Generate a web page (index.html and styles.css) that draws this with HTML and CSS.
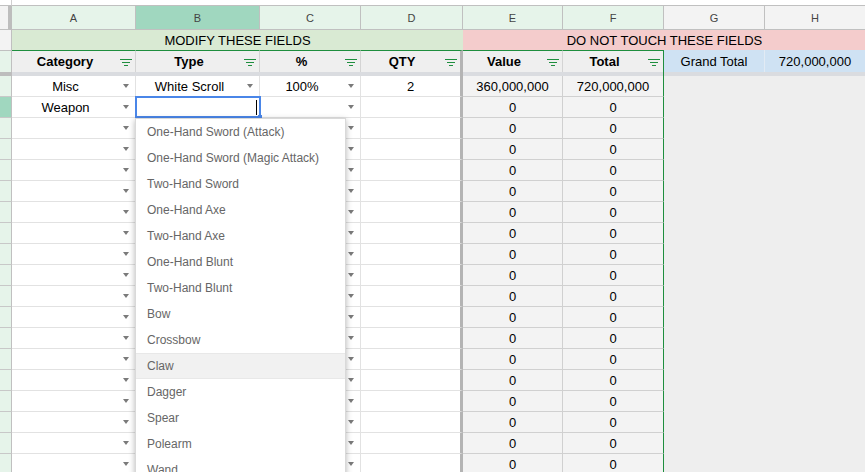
FILE: index.html
```html
<!DOCTYPE html>
<html>
<head>
<meta charset="utf-8">
<title>Sheet</title>
<link rel="stylesheet" href="styles.css">
</head>
<body>
<div class="sheet">
  <div class="strip-rh"></div>
  <div class="strip"></div>

  <div class="corner"></div>
  <div class="col">A</div>
  <div class="col sel">B</div>
  <div class="col">C</div>
  <div class="col">D</div>
  <div class="col">E</div>
  <div class="col">F</div>
  <div class="col plain">G</div>
  <div class="col plain">H</div>

  <div class="rh1"></div>
  <div class="merge-a">MODIFY THESE FIELDS</div>
  <div class="merge-b">DO NOT TOUCH THESE FIELDS</div>

  <div class="rh2"></div>
  <div class="hd"><span class="t">Category</span><svg class="flt" width="12" height="7" viewBox="0 0 12 7"><path d="M0 .5h12M2 3.5h8M4 6.5h4"/></svg></div>
  <div class="hd"><span class="t">Type</span><svg class="flt" width="12" height="7" viewBox="0 0 12 7"><path d="M0 .5h12M2 3.5h8M4 6.5h4"/></svg></div>
  <div class="hd"><span class="t">%</span><svg class="flt" width="12" height="7" viewBox="0 0 12 7"><path d="M0 .5h12M2 3.5h8M4 6.5h4"/></svg></div>
  <div class="hd hd-d"><span class="t">QTY</span><svg class="flt" width="12" height="7" viewBox="0 0 12 7"><path d="M0 .5h12M2 3.5h8M4 6.5h4"/></svg></div>
  <div class="hd"><span class="t">Value</span><svg class="flt" width="12" height="7" viewBox="0 0 12 7"><path d="M0 .5h12M2 3.5h8M4 6.5h4"/></svg></div>
  <div class="hd hd-f"><span class="t">Total</span><svg class="flt" width="12" height="7" viewBox="0 0 12 7"><path d="M0 .5h12M2 3.5h8M4 6.5h4"/></svg></div>
  <div class="gt">Grand Total</div>
  <div class="gt">720,000,000</div>

  <div class="sep-rh"></div>
  <div class="sep-ad"></div>
  <div class="sep-ef"></div>
  <div class="sep-gh"></div>

  <div class="gh"></div>

  <!-- row 3 -->
  <div class="rh"></div>
  <div class="c dd"><span class="t">Misc</span><i class="arr"></i></div>
  <div class="c dd"><span class="t">White Scroll</span><i class="arr"></i></div>
  <div class="c dd"><span class="t">100%</span><i class="arr"></i></div>
  <div class="c qty">2</div>
  <div class="c v">360,000,000</div>
  <div class="c v vf">720,000,000</div>

  <!-- row 4 -->
  <div class="rh sel"></div>
  <div class="c dd"><span class="t">Weapon</span><i class="arr"></i></div>
  <div class="c cur"><span class="caret"></span></div>
  <div class="c dd"><span class="t"></span><i class="arr"></i></div>
  <div class="c qty"></div>
  <div class="c v">0</div>
  <div class="c v vf">0</div>

  <div class="rh"></div><div class="c dd"><span class="t"></span><i class="arr"></i></div><div class="c dd"><span class="t"></span><i class="arr"></i></div><div class="c dd"><span class="t"></span><i class="arr"></i></div><div class="c qty"></div><div class="c v">0</div><div class="c v vf">0</div>
  <div class="rh"></div><div class="c dd"><span class="t"></span><i class="arr"></i></div><div class="c dd"><span class="t"></span><i class="arr"></i></div><div class="c dd"><span class="t"></span><i class="arr"></i></div><div class="c qty"></div><div class="c v">0</div><div class="c v vf">0</div>
  <div class="rh"></div><div class="c dd"><span class="t"></span><i class="arr"></i></div><div class="c dd"><span class="t"></span><i class="arr"></i></div><div class="c dd"><span class="t"></span><i class="arr"></i></div><div class="c qty"></div><div class="c v">0</div><div class="c v vf">0</div>
  <div class="rh"></div><div class="c dd"><span class="t"></span><i class="arr"></i></div><div class="c dd"><span class="t"></span><i class="arr"></i></div><div class="c dd"><span class="t"></span><i class="arr"></i></div><div class="c qty"></div><div class="c v">0</div><div class="c v vf">0</div>
  <div class="rh"></div><div class="c dd"><span class="t"></span><i class="arr"></i></div><div class="c dd"><span class="t"></span><i class="arr"></i></div><div class="c dd"><span class="t"></span><i class="arr"></i></div><div class="c qty"></div><div class="c v">0</div><div class="c v vf">0</div>
  <div class="rh"></div><div class="c dd"><span class="t"></span><i class="arr"></i></div><div class="c dd"><span class="t"></span><i class="arr"></i></div><div class="c dd"><span class="t"></span><i class="arr"></i></div><div class="c qty"></div><div class="c v">0</div><div class="c v vf">0</div>
  <div class="rh"></div><div class="c dd"><span class="t"></span><i class="arr"></i></div><div class="c dd"><span class="t"></span><i class="arr"></i></div><div class="c dd"><span class="t"></span><i class="arr"></i></div><div class="c qty"></div><div class="c v">0</div><div class="c v vf">0</div>
  <div class="rh"></div><div class="c dd"><span class="t"></span><i class="arr"></i></div><div class="c dd"><span class="t"></span><i class="arr"></i></div><div class="c dd"><span class="t"></span><i class="arr"></i></div><div class="c qty"></div><div class="c v">0</div><div class="c v vf">0</div>
  <div class="rh"></div><div class="c dd"><span class="t"></span><i class="arr"></i></div><div class="c dd"><span class="t"></span><i class="arr"></i></div><div class="c dd"><span class="t"></span><i class="arr"></i></div><div class="c qty"></div><div class="c v">0</div><div class="c v vf">0</div>
  <div class="rh"></div><div class="c dd"><span class="t"></span><i class="arr"></i></div><div class="c dd"><span class="t"></span><i class="arr"></i></div><div class="c dd"><span class="t"></span><i class="arr"></i></div><div class="c qty"></div><div class="c v">0</div><div class="c v vf">0</div>
  <div class="rh"></div><div class="c dd"><span class="t"></span><i class="arr"></i></div><div class="c dd"><span class="t"></span><i class="arr"></i></div><div class="c dd"><span class="t"></span><i class="arr"></i></div><div class="c qty"></div><div class="c v">0</div><div class="c v vf">0</div>
  <div class="rh"></div><div class="c dd"><span class="t"></span><i class="arr"></i></div><div class="c dd"><span class="t"></span><i class="arr"></i></div><div class="c dd"><span class="t"></span><i class="arr"></i></div><div class="c qty"></div><div class="c v">0</div><div class="c v vf">0</div>
  <div class="rh"></div><div class="c dd"><span class="t"></span><i class="arr"></i></div><div class="c dd"><span class="t"></span><i class="arr"></i></div><div class="c dd"><span class="t"></span><i class="arr"></i></div><div class="c qty"></div><div class="c v">0</div><div class="c v vf">0</div>
  <div class="rh"></div><div class="c dd"><span class="t"></span><i class="arr"></i></div><div class="c dd"><span class="t"></span><i class="arr"></i></div><div class="c dd"><span class="t"></span><i class="arr"></i></div><div class="c qty"></div><div class="c v">0</div><div class="c v vf">0</div>
  <div class="rh"></div><div class="c dd"><span class="t"></span><i class="arr"></i></div><div class="c dd"><span class="t"></span><i class="arr"></i></div><div class="c dd"><span class="t"></span><i class="arr"></i></div><div class="c qty"></div><div class="c v">0</div><div class="c v vf">0</div>
  <div class="rh"></div><div class="c dd"><span class="t"></span><i class="arr"></i></div><div class="c dd"><span class="t"></span><i class="arr"></i></div><div class="c dd"><span class="t"></span><i class="arr"></i></div><div class="c qty"></div><div class="c v">0</div><div class="c v vf">0</div>
  <div class="rh"></div><div class="c dd"><span class="t"></span><i class="arr"></i></div><div class="c dd"><span class="t"></span><i class="arr"></i></div><div class="c dd"><span class="t"></span><i class="arr"></i></div><div class="c qty"></div><div class="c v">0</div><div class="c v vf">0</div>

  <div class="menu">
    <div class="mi">One-Hand Sword (Attack)</div>
    <div class="mi">One-Hand Sword (Magic Attack)</div>
    <div class="mi">Two-Hand Sword</div>
    <div class="mi">One-Hand Axe</div>
    <div class="mi">Two-Hand Axe</div>
    <div class="mi">One-Hand Blunt</div>
    <div class="mi">Two-Hand Blunt</div>
    <div class="mi">Bow</div>
    <div class="mi">Crossbow</div>
    <div class="mi hov">Claw</div>
    <div class="mi">Dagger</div>
    <div class="mi">Spear</div>
    <div class="mi">Polearm</div>
    <div class="mi">Wand</div>
  </div>
</div>
</body>
</html>
```

FILE: styles.css
```css
* { box-sizing: border-box; }
html, body { margin: 0; padding: 0; }
body {
  font-family: "Liberation Sans", Arial, sans-serif;
  font-size: 13px;
  color: #000;
  background: #fff;
  overflow: hidden;
}
.sheet {
  position: relative;
  width: 865px;
  height: 472px;
  overflow: hidden;
  display: grid;
  grid-template-columns: 12px 124px 124px 101px 102px 100px 101px 101px 101px;
  grid-template-rows: 6px 24px 20px 22px 4px repeat(19, 21px);
}

/* top strip */
.strip-rh { border-right: 1px solid #d0d0d0; border-bottom: 1px solid #c0c0c0; }
.strip { grid-column: 2 / -1; border-bottom: 1px solid #c0c0c0; }

/* column letters */
.corner {
  background: #f3f3f3;
  border-right: 4px solid #bdbdbd;
  border-bottom: 1px solid #c0c0c0;
}
.col {
  display: flex;
  align-items: center;
  justify-content: center;
  font-size: 11px;
  color: #444;
  background: #e6f4ea;
  border-right: 1px solid #c0c0c0;
  border-bottom: 1px solid #c0c0c0;
}
.col.sel { background: #a0d7bf; }
.col.plain { background: #f3f3f3; }

/* row 1 */
.rh1 { background: #f3f3f3; border-right: 1px solid #c0c0c0; }
.merge-a, .merge-b {
  display: flex;
  align-items: center;
  justify-content: center;
}
.merge-a { grid-column: 2 / 6; background: #d9ead3; }
.merge-b { grid-column: 6 / 10; background: #f4cccc; }

/* row 2 */
.rh2 {
  background: #e6f4ea;
  border-top: 1px solid #c0c0c0;
  border-right: 1px solid #c0c0c0;
}
.hd {
  display: flex;
  align-items: center;
  gap: 4px;
  padding: 0 3px 0 2px;
  background: #efefef;
  border-top: 1px solid #1e8e3e;
  border-right: 1px solid #d4d4d4;
  font-weight: bold;
}
.hd .t { flex: 1; text-align: center; }
.hd-d { border-right: 3px solid #b4b4b4; }
.hd-f { border-right: 1px solid #1e8e3e; }
.flt { flex: none; display: block; margin-top: 1px; }
.flt path { stroke: #1e8e3e; stroke-width: 1; fill: none; }
.gt {
  display: flex;
  align-items: center;
  justify-content: center;
  background: #cfe2f3;
  border-right: 1px solid #e2ebf4;
}

/* frozen separator */
.sep-rh { background: #bdbdbd; }
.sep-ad { grid-column: 2 / 6; background: #dadce0; border-right: 3px solid #b4b4b4; }
.sep-ef { grid-column: 6 / 8; background: #dadce0; border-right: 1px solid #1e8e3e; }
.sep-gh { grid-column: 8 / 10; background: #dadce0; }

/* empty gray area G:H */
.gh { grid-column: 8 / 10; grid-row: 6 / -1; background: #eeeeee; }

/* data rows */
.rh {
  background: #e6f4ea;
  border-right: 1px solid #c0c0c0;
  border-bottom: 1px solid #c8c8c8;
}
.rh.sel { background: #a0d7bf; }
.c {
  display: flex;
  align-items: center;
  border-right: 1px solid #e2e2e2;
  border-bottom: 1px solid #e2e2e2;
  white-space: nowrap;
}
.dd { gap: 4px; padding: 0 6px 0 0; }
.dd .t { flex: 1; text-align: center; }
.arr {
  flex: none;
  width: 0;
  height: 0;
  border-left: 3.5px solid transparent;
  border-right: 3.5px solid transparent;
  border-top: 4px solid #7a7a7a;
}
.qty { justify-content: center; border-right: 3px solid #b4b4b4; }
.v {
  justify-content: center;
  background: #f3f3f3;
  border-right: 1px solid #d0d0d0;
  border-bottom: 1px solid #d0d0d0;
}
.vf { border-right: 1px solid #1e8e3e; }

/* active cell */
.cur {
  position: relative;
  justify-content: flex-end;
  padding-right: 2px;
}
.caret { width: 1px; height: 15px; background: #000; }
.cur::after {
  content: "";
  position: absolute;
  left: -1px;
  top: -1px;
  right: -2px;
  bottom: -1px;
  border: 2px solid #4a86e8;
  z-index: 2;
}
.cur::before {
  content: "";
  position: absolute;
  right: -3px;
  bottom: -2px;
  width: 4px;
  height: 4px;
  background: #4a86e8;
  z-index: 3;
}

/* dropdown */
.menu {
  position: absolute;
  left: 135px;
  top: 118px;
  width: 211px;
  background: #fff;
  border: 1px solid rgba(0, 0, 0, 0.15);
  box-shadow: 0 2px 6px rgba(0, 0, 0, 0.3);
  z-index: 5;
  font-size: 12px;
}
.mi {
  height: 26px;
  display: flex;
  align-items: center;
  padding-left: 11px;
  color: #666;
  white-space: nowrap;
}
.mi.hov {
  background: #f1f1f1;
  border-top: 1px solid #e8e8e8;
  border-bottom: 1px solid #e8e8e8;
}
```
